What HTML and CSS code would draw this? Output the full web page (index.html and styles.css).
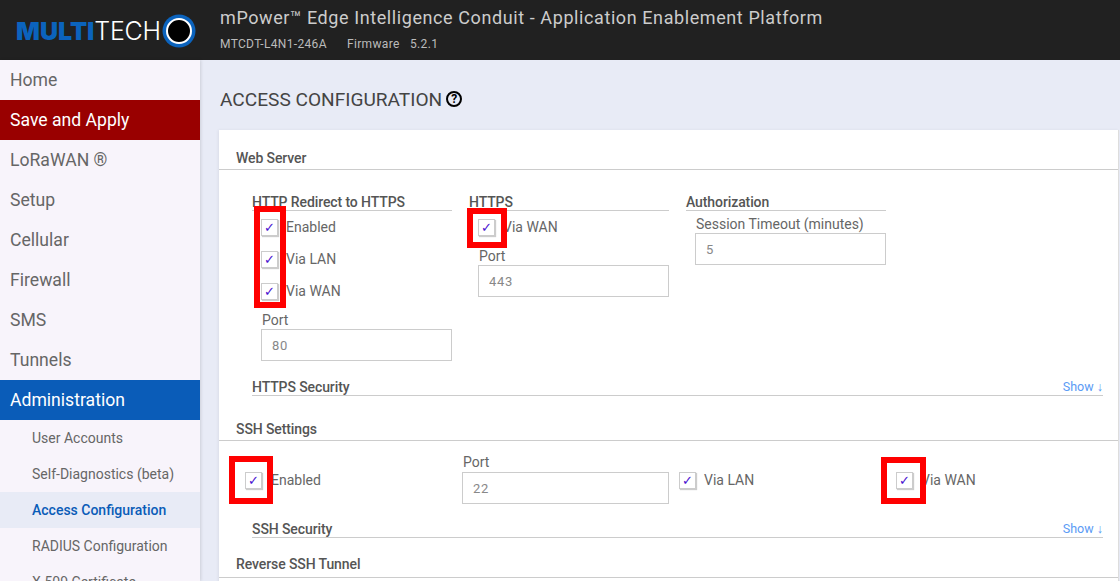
FILE: index.html
```html
<!DOCTYPE html>
<html>
<head>
<meta charset="utf-8" />
<title>Access Configuration</title>
<link rel="stylesheet" href="styles.css">
</head>
<body>

<header class="topbar">
	<div class="logo">
		<span class="logo-multi">MULTI</span><span class="logo-tech">TECH</span>
		<svg class="logo-ring" width="34" height="34" viewBox="0 0 34 34">
			<circle cx="17" cy="17" r="16.5" fill="#0b63bd"/>
			<circle cx="17" cy="17" r="12" fill="#000" stroke="#fff" stroke-width="2"/>
		</svg>
	</div>
	<div class="product">
		<div class="product-name">mPower™ Edge Intelligence Conduit - Application Enablement Platform</div>
		<div class="product-info">
			<span class="model">MTCDT-L4N1-246A</span>
			<span class="fw-label">Firmware</span>
			<span>5.2.1</span>
		</div>
	</div>
</header>

<div class="layout">
	<nav class="sidebar">
		<a class="nav-item">Home</a>
		<a class="nav-item nav-save">Save and Apply</a>
		<a class="nav-item">LoRaWAN ®</a>
		<a class="nav-item">Setup</a>
		<a class="nav-item">Cellular</a>
		<a class="nav-item">Firewall</a>
		<a class="nav-item">SMS</a>
		<a class="nav-item">Tunnels</a>
		<a class="nav-item nav-open">Administration</a>
		<a class="nav-sub">User Accounts</a>
		<a class="nav-sub">Self-Diagnostics (beta)</a>
		<a class="nav-sub nav-current">Access Configuration</a>
		<a class="nav-sub">RADIUS Configuration</a>
		<a class="nav-sub">X.509 Certificate</a>
	</nav>

	<main class="content">
		<h1 class="page-title">ACCESS CONFIGURATION <span class="help">?</span></h1>

		<section class="card">
			<h2 class="section-head">Web Server</h2>

			<div class="columns">
				<div class="col">
					<h3 class="group-head">HTTP Redirect to HTTPS</h3>
					<label class="check"><input type="checkbox" checked> Enabled</label>
					<label class="check"><input type="checkbox" checked> Via LAN</label>
					<label class="check"><input type="checkbox" checked> Via WAN</label>
					<div class="field field-after-checks">
						<label>Port</label>
						<input class="text-input" type="text" value="80">
					</div>
				</div>
				<div class="col">
					<h3 class="group-head">HTTPS</h3>
					<label class="check"><input type="checkbox" checked> Via WAN</label>
					<div class="field field-tight">
						<label>Port</label>
						<input class="text-input" type="text" value="443">
					</div>
				</div>
				<div class="col">
					<h3 class="group-head">Authorization</h3>
					<div class="field field-auth">
						<label>Session Timeout (minutes)</label>
						<input class="text-input" type="text" value="5">
					</div>
				</div>
			</div>

			<div class="sub-head sub-https">
				<h3>HTTPS Security</h3>
				<a class="show">Show ↓</a>
			</div>

			<h2 class="section-head head-ssh">SSH Settings</h2>

			<div class="ssh-row">
				<label class="check ssh-enabled"><input type="checkbox" checked> Enabled</label>
				<div class="field ssh-port">
					<label>Port</label>
					<input class="text-input" type="text" value="22">
				</div>
				<label class="check ssh-lan"><input type="checkbox" checked> Via LAN</label>
				<label class="check"><input type="checkbox" checked> Via WAN</label>
			</div>

			<div class="sub-head sub-ssh">
				<h3>SSH Security</h3>
				<a class="show">Show ↓</a>
			</div>

			<h2 class="section-head head-tunnel">Reverse SSH Tunnel</h2>
		</section>
	</main>
</div>

<!-- red boxes drawn over the screenshot -->
<span class="mark mark-redirect"></span>
<span class="mark mark-https"></span>
<span class="mark mark-ssh"></span>
<span class="mark mark-sshwan"></span>

</body>
</html>
```

FILE: styles.css
```css
* { box-sizing: border-box; }

html, body {
	height: 100%;
	margin: 0;
	overflow: hidden;
}
body {
	font-family: Roboto, "Liberation Sans", sans-serif;
	font-size: 14px;
	color: #666;
	background: #e8ebf6;
}

/* top bar */
.topbar {
	display: flex;
	height: 60px;
	background: #212121;
}
.logo {
	display: flex;
	align-items: center;
	width: 220px;
	padding: 2px 0 0 16px;
	line-height: 1;
}
.logo-multi {
	font-family: Inter, sans-serif;
	font-size: 25px;
	font-weight: 900;
	letter-spacing: 0;
	color: #0b63bd;
}
.logo-tech {
	font-family: Inter, sans-serif;
	font-size: 25px;
	font-weight: 300;
	letter-spacing: -.3px;
	color: #fff;
}
.logo-ring { margin-left: 1px; }
.product { padding-top: 7px; }
.product-name {
	font-size: 18px;
	line-height: 22px;
	letter-spacing: .59px;
	color: #ccc;
}
.product-info {
	display: flex;
	margin-top: 8px;
	font-size: 12px;
	line-height: 14px;
	letter-spacing: .33px;
	color: #bbb;
}
.model { width: 127px; }
.fw-label { width: 63px; }

/* left menu */
.layout { display: flex; }
.sidebar {
	flex: none;
	width: 200px;
	height: 521px;
	overflow: hidden;
	background: #f8f4fb;
	box-shadow: 1px 0 3px rgba(0,0,0,.12);
}
.nav-item {
	display: block;
	height: 40px;
	padding-left: 10px;
	font-size: 17.6px;
	line-height: 40px;
	color: #666;
}
.nav-save { background: #990000; color: #fff; }
.nav-open { background: #0a5cb8; color: #fff; }
.nav-sub {
	display: block;
	height: 36px;
	padding-left: 32px;
	font-size: 14px;
	line-height: 36px;
	color: #666;
}
.nav-current {
	background: #e8ebf6;
	color: #0a5cb8;
	font-weight: 500;
}

/* main part */
.content {
	flex: 1;
	padding-left: 19px;
}
.page-title {
	display: flex;
	align-items: center;
	height: 70px;
	margin: 0;
	padding: 8px 0 0 1px;
	font-size: 19.1px;
	font-weight: 400;
	color: #444;
}
.help {
	display: block;
	width: 16px;
	height: 16px;
	margin-left: 4px;
	border: 2px solid #000;
	border-radius: 50%;
	font-size: 12px;
	font-weight: 700;
	line-height: 12px;
	text-align: center;
	color: #000;
}
.card {
	height: 460px;
	margin-right: 1px;
	background: #fff;
	border-right: 1px solid #ddd;
	box-shadow: -1px 0 3px rgba(0,0,0,.06);
}
.section-head {
	height: 40px;
	margin: 0;
	padding: 19px 0 0 17px;
	border-bottom: 1px solid #ccc;
	font-size: 14px;
	font-weight: 500;
	line-height: 18px;
	letter-spacing: -.1px;
	color: #555;
}
.group-head {
	margin: 0;
	height: 24px;
	padding-top: 6px;
	border-bottom: 1px solid #ccc;
	font-size: 14px;
	font-weight: 500;
	line-height: 18px;
	letter-spacing: -.1px;
	color: #555;
}
.columns {
	display: flex;
	gap: 17px;
	padding: 17px 0 0 33px;
}
.col { width: 200px; }
.check {
	display: flex;
	align-items: center;
	height: 32px;
	padding-left: 9px;
	font-size: 14px;
	color: #666;
}
.check input {
	appearance: none;
	display: block;
	flex: none;
	width: 17px;
	height: 17px;
	margin: 0 8px 0 0;
	border: 1px solid #ccc;
	box-shadow: 1px 1px 1px #ccc;
	background: #fff;
	color: #4a10d0;
	font-size: 13px;
	line-height: 15px;
	text-align: center;
}
.check input::after { content: "✓"; }

.field { padding-left: 9px; }
.field label {
	display: block;
	height: 18px;
	padding-left: 1px;
	font-size: 14px;
	line-height: 18px;
}
.field-after-checks { margin-top: 4px; }
.field-tight { margin-top: 4px; }
.field-auth { margin-top: 4px; }
.text-input {
	display: block;
	width: 100%;
	height: 32px;
	padding: 0 10px;
	border: 1px solid #ccc;
	font-family: inherit;
	font-size: 13px;
	letter-spacing: .7px;
	color: #888;
}

.sub-head {
	display: flex;
	justify-content: space-between;
	align-items: flex-end;
	height: 24px;
	margin: 0 15px 0 33px;
	border-bottom: 1px solid #ccc;
}
.sub-head h3 {
	margin: 0;
	font-size: 14px;
	font-weight: 500;
	line-height: 16px;
	letter-spacing: -.1px;
	color: #555;
}
.show {
	font-size: 12.5px;
	line-height: 16px;
	color: #5b9bf5;
}
.sub-https { margin-top: 11px; }
.sub-ssh { margin-top: 10px; }

.ssh-row {
	display: flex;
	align-items: flex-start;
	padding: 12px 0 0 17px;
}
.ssh-row .check { margin-top: 11px; }
.ssh-enabled { width: 226px; }
.ssh-enabled input { margin-right: 9px; }
.ssh-port { width: 207px; padding-left: 0; margin-right: 1px; }
.ssh-port label { height: 19px; }
.ssh-lan { width: 217px; }
.head-ssh { height: 45px; padding-top: 24px; }
.head-tunnel { height: 40px; padding-top: 17px; }

/* annotations lying over the page */
.mark {
	position: absolute;
	border: 6px solid #f00;
}
.mark-redirect { left: 254px; top: 206px; width: 32px; height: 102px; }
.mark-https { left: 467px; top: 208px; width: 40px; height: 40px; }
.mark-ssh { left: 229px; top: 456px; width: 44px; height: 48px; }
.mark-sshwan { left: 881px; top: 457px; width: 45px; height: 47px; }
```
